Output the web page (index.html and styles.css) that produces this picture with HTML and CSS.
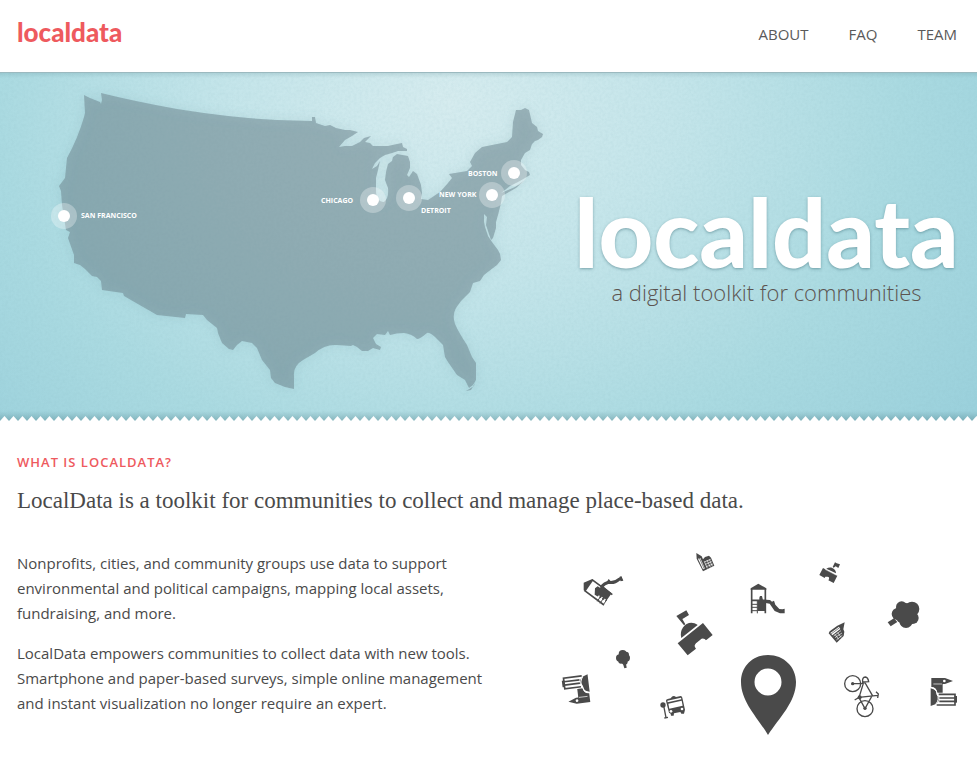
FILE: index.html
```html
<!DOCTYPE html>
<html lang="en">
<head>
<meta charset="utf-8">
<meta name="viewport" content="width=device-width, initial-scale=1">
<title>localdata</title>
<link rel="stylesheet" href="styles.css">
</head>
<body>
<header class="site-header">
  <a class="brand" href="#">localdata</a>
  <nav class="nav">
    <a href="#about">ABOUT</a>
    <a href="#faq">FAQ</a>
    <a href="#team">TEAM</a>
  </nav>
</header>

<section class="hero">
  <svg class="paper" aria-hidden="true">
    <filter id="grain"><feTurbulence type="fractalNoise" baseFrequency="0.35" numOctaves="3" seed="4"/><feColorMatrix values="0 0 0 0 0.2  0 0 0 0 0.4  0 0 0 0 0.45  0.9 0 0 0 -0.3"/></filter>
    <rect width="100%" height="100%" filter="url(#grain)"/>
  </svg>
  <svg class="map" viewBox="0 73 556 343">
    <path class="land" d="M84 95L90 98L100 102L101 104L102 100L101 93Q133 101 177 109Q233 118 277 120L312 121L312 117L315 117L316 123L325 126L330 125L336 128L345 130L350 130L358 132L352 136L345 140L339 147L345 146L352 146L360 142L364 138L371 136L365 142L370 143L373 146L380 146L388 146L397 144L402 143L403 147L407 149L407 151L398 151L392 153L385 155L380 158L375 163L372 169L377 166L380 161L378 170L376 178L376 190Q376 202 384 202Q389 198 388 188L385 180L386 172L388 164L392 161L393 157L397 154L408 156L410 162L410 168L407 175L409 177L413 171L417 174L421 185L422 193L421 199L428 200L440 192L448 183L452 178L449 174L455 173L467 171L472 166L470 162L475 153L482 147L507 142L512 137L513 122L516 110L521 110L525 108L529 110L532 123L537 127L538 131L543 134L542 137L538 140L535 141L532 144L530 150L525 153L521 160L521 165L525 170L529 172L530 175L525 178L518 182L510 186L505 190L501 193L515 187L525 180L516 188L502 196L501 203L498 215L496 222L496 228L493 238L491 240L488 231L486 225L487 217L484 214L484 222L485 227L488 236L492 242L498 250L500 254L501 260L497 265L493 268L484 275L480 281L473 283L470 292L461 301L456 308Q452 315 455 324Q459 333 467 345L472 357L476 363L476 380L473 385L469 388L468 386L465 380L457 375L448 362L445 357L443 345L435 337Q429 332 427 333Q420 339 417 339Q412 334 404 333Q396 333 390 335L388 331L385 335L377 334L373 338L376 344L381 347L380 350L373 348L368 351L362 351L357 347L353 345L351 346L337 345Q325 344 315 353L303 360Q293 366 294 376L294 389L285 387L275 383L271 378L270 370L262 360L257 348L252 343L242 341L237 345L233 350L229 349L222 343L218 333L217 328L207 320L203 315L186 314L185 318L157 315L124 296L123 293L102 290L101 281L97 277L92 276L85 269L80 265L74 263L74 255L68 238L70 232L66 230L62 205L61 191L59 186L65 178L67 158Q78 138 84 117L85 113Z"/>
    <path class="land" d="M466 391L474 386L475 383L471 390Z"/>
    <g class="city-halo"><circle cx="64" cy="216" r="13"/><circle cx="373" cy="200" r="13"/><circle cx="409" cy="198" r="13"/><circle cx="492" cy="195" r="13"/><circle cx="514" cy="173" r="13"/></g>
    <g class="city"><circle cx="64" cy="216" r="6"/><circle cx="373" cy="200" r="6"/><circle cx="409" cy="198" r="6"/><circle cx="492" cy="195" r="6"/><circle cx="514" cy="173" r="6"/></g>
    <g class="city-name">
      <text x="81" y="218">SAN FRANCISCO</text>
      <text x="321" y="203">CHICAGO</text>
      <text x="421" y="213">DETROIT</text>
      <text x="439" y="197">NEW YORK</text>
      <text x="468" y="176">BOSTON</text>
    </g>
  </svg>
  <div class="hero-copy">
    <h1 class="wordmark">localdata</h1>
    <p class="tagline">a digital toolkit for communities</p>
  </div>
  <svg class="zigzag" aria-hidden="true">
    <pattern id="teeth" width="9" height="5" patternUnits="userSpaceOnUse"><path fill="#fff" d="M0 5L4.500 0L9 5Z"/></pattern>
    <rect width="100%" height="5" fill="url(#teeth)"/>
  </svg>
</section>

<main class="content" id="about">
  <h2 class="eyebrow">WHAT IS LOCALDATA?</h2>
  <p class="lead">LocalData is a toolkit for communities to collect and manage place-based data.</p>
  <div class="columns">
    <div class="copy">
      <p>Nonprofits, cities, and community groups use data to support environmental and political campaigns, mapping local assets, fundraising, and more.</p>
      <p>LocalData empowers communities to collect data with new tools. Smartphone and paper-based surveys, simple online management and instant visualization no longer require an expert.</p>
    </div>
    <svg class="places" viewBox="550 540 410 205" aria-hidden="true">
      <defs>
        <g id="hand">
          <path d="M634 114H675L699 123L675 132H668V158H652Q649 142 636 141H634Z"/>
          <circle cx="673" cy="123" r="4" fill="#fff"/>
          <path d="M640 132H666" stroke="#fff" stroke-width="2"/>
          <path d="M632 145Q648 148 650 160V163L656 172V183L648 192L632 198Z"/>
          <path class="line" stroke-width="5" d="M656 163H705V195H650M658 174H705M658 184H705"/>
          <path d="M704 168H711V188H704Z"/>
          <path d="M634 143Q650 144 651 162Q660 178 647 193" fill="none" stroke="#fff" stroke-width="3"/>
        </g>
      </defs>
      <!-- map pin -->
      <path fill-rule="evenodd" d="M768 655C752 655 741 667 741 682C741 702 758 718 768 735C779 718 796 702 796 682C796 667 784 655 768 655ZM768 668.500A13.500 13.500 0 1 1 768 695.500A13.500 13.500 0 1 1 768 668.500Z"/>
      <!-- tilted playground -->
      <g transform="translate(550 540) scale(.33333)">
        <path d="M101 128L127 117L130 121L107 154L101 151Z"/>
        <path d="M135 145L143 139L150 143L156 136L185 160L168 184L134 164Z"/>
        <path d="M148 167L138 182M157 171L146 188M166 177L155 193" stroke="#fff" stroke-width="4"/>
        <path class="line" stroke-width="3" d="M152 169L142 184M161 174L150 190M170 180L160 194"/>
        <path class="line" stroke-width="5" d="M126 119L187 164M103 151L162 195"/>
        <path class="line" stroke-width="9" d="M153 142Q164 129 176 127Q194 130 207 118L216 115"/>
        <path d="M170 126L176 117L184 125ZM208 111L214 108L220 122L212 124Z"/>
      </g>
      <!-- upper middle icons -->
      <g transform="translate(670 540) scale(.33333)">
        <path d="M79 39L95 49L99 58L105 51L117 47L123 53L133 77L99 94L80 56Z"/>
        <path d="M84 56L91 54L105 86L99 88Z" fill="#fff"/>
        <path d="M88 54L103 87" class="line" stroke-width="2"/>
        <path d="M103 66L122 58M106 73L125 65M109 80L129 72M103 64L112 85M111 60L121 82M118 58L127 79" stroke="#fff" stroke-width="2"/>
        <path d="M242 149V145L265 131L289 145V149Z"/>
        <path class="line" stroke-width="5" d="M245 146V220M286 146V220M243 181H289"/>
        <path class="line" stroke-width="3" d="M245 193H263M245 202H263M245 212H263M262 183V220"/>
        <path d="M263 183H286V213H263ZM268 182V173L270 168H276L279 181Z"/>
        <path d="M287 179L300 180L306 185L312 182L316 194L328 207L337 208L344 206V220H330L314 213L299 191L287 189Z"/>
        <path d="M19 228L49 211L57 225L41 235L37 237L46 253L42 256Z"/>
        <path d="M34 294C25 264 56 235 83 255Z"/>
        <path d="M23 310L99 249L128 285L108 301L104 297Q97 293 91 299L78 310Q71 317 76 323L78 326L53 346Z"/>
      </g>
      <!-- upper right icons -->
      <g transform="translate(800 540) scale(.33333)">
        <path d="M105 67L110 70L120 73L115 84L107 79L101 83L98 81Z"/>
        <path d="M79 86C91 77 108 85 108 100Z"/>
        <path d="M69 84L112 107L101 129L85 121Q91 111 82 110L76 110L74 114L58 105Z"/>
        <path d="M75 88L110 106" stroke="#fff" stroke-width="1.500"/>
        <circle cx="305" cy="201" r="17"/><circle cx="336" cy="207" r="22"/><circle cx="293" cy="222" r="18"/><circle cx="318" cy="244" r="20"/><circle cx="338" cy="234" r="18"/><circle cx="316" cy="221" r="32"/>
        <path d="M263 247L282 235L292 246L272 259Z"/>
        <path d="M134 247L130 268L133 275L131 288L110 308L86 280L89 274L112 257Z"/>
        <path d="M91 279L117 260L121 267L97 286Z" fill="#fff"/>
        <path d="M93 282L119 263" class="line" stroke-width="2"/>
        <path d="M101 288L123 272M105 293L126 279M109 300L127 286M105 283L116 298M113 278L123 292" stroke="#fff" stroke-width="2"/>
      </g>
      <!-- lower left icons -->
      <g transform="translate(550 640) scale(.33333)">
        <circle cx="218" cy="42" r="12"/><circle cx="209" cy="54" r="11"/><circle cx="229" cy="54" r="11"/><circle cx="213" cy="63" r="8"/><circle cx="224" cy="65" r="9"/><circle cx="228" cy="44" r="9"/>
        <path d="M217 66H227L230 83L223 85Z"/>
        <use href="#hand" transform="translate(79 149) rotate(173) translate(-671 -156)"/>
        <circle cx="339" cy="195" r="8"/>
        <path class="line" stroke-width="4" d="M341 197L348 233M343 234L354 232"/>
        <path d="M348 183Q347 178 353 177L362 175Q369 164 378 171L392 168Q396 168 397 173L405 209L402 221H394L391 216L372 220L371 227H363L362 221L357 218Z"/>
        <path d="M352 182L393 173L394 178L353 187ZM355 191L395 182L398 197L358 206Z" fill="#fff"/>
        <circle cx="363" cy="214" r="4" fill="#fff"/><circle cx="396" cy="207" r="4" fill="#fff"/>
      </g>
      <!-- lower right icons -->
      <g transform="translate(720 640) scale(.33333)">
        <use href="#hand"/>
        <g class="line" stroke-width="4">
          <circle cx="398" cy="131" r="24"/><circle cx="435" cy="206" r="24"/>
          <path d="M398 131H423L435 128L457 166L435 206L417 173L430 130M404 180L417 172L473 166M468 155L475 162L473 174M428 126Q426 112 436 111Q444 112 446 125Z"/>
        </g>
        <circle cx="398" cy="131" r="5"/><circle cx="435" cy="205" r="5"/><circle cx="419" cy="172" r="6"/>
      </g>
    </svg>
  </div>
</main>
</body>
</html>
```

FILE: styles.css
```css
* { box-sizing: border-box; }

body {
  margin: 0;
  background: #fff;
  color: #4a4a4a;
  font: 15px/25px "Open Sans", "Liberation Sans", sans-serif;
}

h1, h2, p { margin: 0; }

a { color: inherit; text-decoration: none; }

.site-header {
  display: flex;
  justify-content: space-between;
  align-items: center;
  height: 72px;
  padding: 0 20px 4px 17px;
}

.brand {
  padding-bottom: 4px;
  color: #ee5a5e;
  font: 900 26px/28px Lato, sans-serif;
}

.nav {
  display: flex;
  gap: 40px;
  color: #5a5a5a;
}

.hero {
  position: relative;
  display: grid;
  grid-template-columns: 556fr 421fr;
  padding: 0 0 5px;
  border-top: 1px solid #9bb9bf;
  background:
    linear-gradient(rgba(60, 110, 120, .15), transparent 5px),
    linear-gradient(to top, rgba(60, 110, 120, .35), transparent 10px),
    radial-gradient(ellipse 66% 150% at 46% 8%, #d6ecef 0%, #c4e5ea 35%, #aadae1 70%, #9bd1dc 100%);
}

.paper {
  position: absolute;
  inset: 0;
  width: 100%;
  height: 100%;
  opacity: .18;
}

.map {
  position: relative;
  display: block;
  width: 100%;
}

.land {
  fill: #6f878f;
  fill-opacity: .55;
  filter: drop-shadow(0 0 6px rgba(60, 110, 120, .2));
}

.city-halo { fill: #fff; fill-opacity: .3; }

.city { fill: #fff; }

.city-name {
  fill: #fff;
  font-size: 7px;
  font-weight: 700;
}

.hero-copy {
  position: relative;
  align-self: center;
  text-align: center;
}

.wordmark {
  color: #fff;
  font: 900 95px/96px Lato, sans-serif;
  text-shadow: 0 1px 3px rgba(50, 100, 110, .5);
}

.tagline {
  margin-top: -2px;
  color: #5c5450;
  font-size: 22px;
  font-weight: 300;
  line-height: 30px;
}

.zigzag {
  position: absolute;
  bottom: 0;
  left: 0;
  width: 100%;
  height: 5px;
}

.content { padding: 29px 17px; }

.eyebrow {
  color: #ee5a5e;
  font-size: 13px;
  font-weight: 600;
  line-height: 24px;
  letter-spacing: 1px;
}

.lead {
  margin-top: 11px;
  font: 23px/32px "Liberation Serif", serif;
}

.columns {
  display: grid;
  grid-template-columns: 473fr 410fr;
  gap: 60px;
  align-items: start;
  margin-top: 23px;
}

.copy {
  display: grid;
  gap: 15px;
  padding-top: 11px;
}

.places {
  display: block;
  width: 100%;
  fill: #4a4a4a;
}

.line {
  fill: none;
  stroke: #4a4a4a;
}
```
